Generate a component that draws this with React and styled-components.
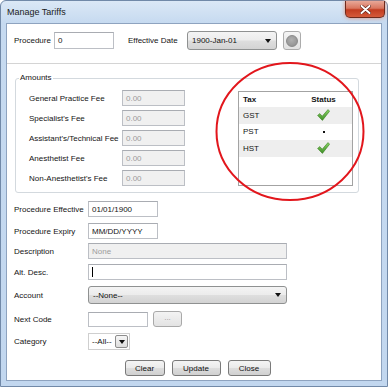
import React from 'react';
import styled, { createGlobalStyle } from 'styled-components';

const Global = createGlobalStyle`
  html, body { margin: 0; padding: 0; background: #ffffff; }
  body { font-family: "Liberation Sans", Arial, sans-serif; font-size: 8px; color: #141414; }
  * { box-sizing: border-box; }
`;

const Window = styled.div`
  position: relative;
  width: 388px;
  height: 387px;
  border: 1px solid #7189a8;
  border-radius: 6px 6px 0 0;
  background: linear-gradient(180deg, #dbe8f6 0px, #c6daf0 22px, #c2d7ef 100%);
  display: flex;
  flex-direction: column;
  padding: 0 5px 5px 5px;
`;

const TitleBar = styled.div`
  height: 22px;
  display: flex;
  align-items: flex-start;
  justify-content: space-between;
`;

const Title = styled.div`
  margin: 6px 0 0 1px;
  font-size: 9px;
  color: #1b1b1b;
`;

const CloseBtn = styled.div`
  width: 40px;
  height: 17px;
  margin-right: -3px;
  border: 1px solid #6f2a1c;
  border-top: none;
  border-radius: 0 0 5px 5px;
  background: linear-gradient(180deg, #e8a898 0%, #d9765f 45%, #c23c20 55%, #d55a3a 100%);
  box-shadow: 0 0 4px rgba(230, 110, 70, 0.7);
  display: flex;
  align-items: center;
  justify-content: center;
`;

const Client = styled.div`
  flex: 1;
  background: #ffffff;
  border: 1px solid #8ea3bf;
  display: flex;
  flex-direction: column;
`;

const TopRow = styled.div`
  display: flex;
  align-items: center;
  height: 19px;
  margin-top: 7px;
  padding-left: 7px;
`;

const Label = styled.div`
  width: ${p => p.$w || 'auto'};
  margin-left: ${p => p.$ml || 0}px;
  white-space: nowrap;
`;

const TextInput = styled.div`
  width: ${p => p.$w}px;
  height: ${p => p.$h || 16}px;
  margin-left: ${p => p.$ml || 0}px;
  border: 1px solid #bcbfc5;
  border-top-color: #a9acb2;
  background: ${p => (p.$disabled ? '#f0f0f0' : '#ffffff')};
  color: ${p => (p.$disabled ? '#9c9c9c' : '#141414')};
  display: flex;
  align-items: center;
  padding-left: 3px;
  white-space: nowrap;
`;

const Caret = styled.span`
  width: 1px;
  height: 10px;
  background: #000;
`;

const DropSelect = styled.div`
  width: ${p => p.$w}px;
  height: ${p => p.$h}px;
  margin-left: ${p => p.$ml || 0}px;
  border: 1px solid #8f9191;
  border-radius: 3px;
  background: linear-gradient(180deg, #f4f4f4 0%, #ececec 48%, #dedede 52%, #d3d3d3 100%);
  display: flex;
  align-items: center;
  justify-content: space-between;
  padding: 0 5px 0 4px;
  color: #111;
`;

const Arrow = styled.span`
  width: 0;
  height: 0;
  border-left: 3px solid transparent;
  border-right: 3px solid transparent;
  border-top: 4px solid #111;
`;

const RoundBtn = styled.div`
  width: 18px;
  height: 19px;
  margin-left: 6px;
  border: 1px solid #acacac;
  border-radius: 3px;
  background: linear-gradient(180deg, #f5f5f5, #e2e2e2);
  display: flex;
  align-items: center;
  justify-content: center;
`;

const Dot = styled.div`
  width: 12px;
  height: 12px;
  border-radius: 50%;
  background: radial-gradient(circle at 45% 40%, #b0b0b0, #8c8c8c);
  border: 1px solid #8a8a8a;
`;

const Divider = styled.div`
  margin-top: 13px;
  height: 1px;
  background: #d4d4d4;
`;

const Group = styled.fieldset`
  margin: 9px 0 0 8px;
  width: 344px;
  padding: 0 0 6px 13px;
  border: 1px solid #d3d9de;
  border-radius: 3px;
  display: flex;
  align-items: flex-start;
  min-width: 0;
`;

const Legend = styled.legend`
  margin-left: -10px;
  padding: 0 1px;
  line-height: 10px;
  font-size: 8px;
`;

const Fees = styled.div`
  display: flex;
  flex-direction: column;
  gap: 4px;
  margin-top: 7px;
`;

const FeeRow = styled.div`
  display: flex;
  align-items: center;
  height: 16px;
`;

const TaxTable = styled.div`
  margin: 8px 0 0 53px;
  width: 115px;
  height: 95px;
  border: 1px solid #a3a3a3;
  display: flex;
  flex-direction: column;
`;

const TaxRow = styled.div`
  display: grid;
  grid-template-columns: 56px 1fr;
  align-items: center;
  height: ${p => p.$h}px;
  background: ${p => (p.$alt ? '#eeeeee' : '#ffffff')};
  font-weight: ${p => (p.$head ? 'bold' : 'normal')};
`;

const TaxCell = styled.div`
  padding-left: 4px;
`;

const StatusCell = styled.div`
  display: flex;
  justify-content: center;
  align-items: center;
`;

const SmallDot = styled.span`
  width: 2px;
  height: 2px;
  background: #111;
`;

const Form = styled.div`
  margin-top: 8px;
  padding-left: 7px;
  display: flex;
  flex-direction: column;
`;

const FormRow = styled.div`
  display: flex;
  align-items: center;
  height: ${p => p.$h}px;
  margin-bottom: ${p => p.$gap}px;
`;

const FormLabel = styled.div`
  width: 74px;
  white-space: nowrap;
`;

const EllipsisBtn = styled.div`
  width: 29px;
  height: 16px;
  margin-left: 5px;
  border: 1px solid #a9a9a9;
  border-radius: 3px;
  background: linear-gradient(180deg, #f3f3f3, #e3e3e3);
  color: #9a9a9a;
  display: flex;
  align-items: center;
  justify-content: center;
  padding-bottom: 3px;
`;

const Combo = styled.div`
  width: 42px;
  height: 17px;
  border: 1px solid #cfcfcf;
  display: flex;
  align-items: center;
  justify-content: space-between;
  padding: 0 1px 0 3px;
`;

const ComboBtn = styled.div`
  width: 13px;
  height: 13px;
  border: 1px solid #8d8d8d;
  border-radius: 2px;
  background: linear-gradient(180deg, #f6f6f6, #dedede);
  display: flex;
  align-items: center;
  justify-content: center;
`;

const ButtonBar = styled.div`
  display: flex;
  justify-content: center;
  gap: 7px;
  padding-left: 7px;
`;

const Button = styled.div`
  width: ${p => p.$w}px;
  height: 16px;
  border: 1px solid #7a7a7a;
  border-radius: 3px;
  background: linear-gradient(180deg, #f4f4f4 0%, #ebebeb 48%, #dddddd 52%, #d0d0d0 100%);
  display: flex;
  align-items: center;
  justify-content: center;
  color: #111;
`;

const CircleOverlay = styled.svg`
  position: absolute;
  left: 214px;
  top: 60px;
  pointer-events: none;
`;

const Check = () => (
  <svg width="13" height="12" viewBox="0 0 13 12">
    <defs>
      <linearGradient id="gk" x1="0" y1="0" x2="0" y2="1">
        <stop offset="0" stopColor="#8ad466" />
        <stop offset="1" stopColor="#3f8f28" />
      </linearGradient>
    </defs>
    <path d="M0.6 6.4 L2.8 4.6 L5.2 7.2 L11 0.6 L12.6 2.2 L5.4 11.4 Z" fill="url(#gk)" stroke="#3a7f24" strokeWidth="0.6" strokeLinejoin="round" />
  </svg>
);

const fees = [
  "General Practice Fee",
  "Specialist's Fee",
  "Assistant's/Technical Fee",
  "Anesthetist Fee",
  "Non-Anesthetist's Fee",
];

export default function App() {
  return (
    <>
      <Global />
      <Window>
        <TitleBar>
          <Title>Manage Tariffs</Title>
          <CloseBtn>
            <svg width="11" height="9" viewBox="0 0 11 9">
              <path d="M1.5 1 L9.5 8 M9.5 1 L1.5 8" stroke="#5a1a10" strokeWidth="3.2" strokeLinecap="round" />
              <path d="M1.5 1 L9.5 8 M9.5 1 L1.5 8" stroke="#ffffff" strokeWidth="2" strokeLinecap="round" />
            </svg>
          </CloseBtn>
        </TitleBar>
        <Client>
          <TopRow>
            <Label $w="40px">Procedure</Label>
            <TextInput $w={60} $h={17}>0</TextInput>
            <Label $w="59px" $ml={14}>Effective Date</Label>
            <DropSelect $w={90} $h={19}>
              <span>1900-Jan-01</span>
              <Arrow />
            </DropSelect>
            <RoundBtn><Dot /></RoundBtn>
          </TopRow>
          <Divider />
          <Group>
            <Legend>Amounts</Legend>
            <Fees>
              {fees.map(f => (
                <FeeRow key={f}>
                  <Label $w="93px">{f}</Label>
                  <TextInput $w={63} $disabled>0.00</TextInput>
                </FeeRow>
              ))}
            </Fees>
            <TaxTable>
              <TaxRow $head $h={15}>
                <TaxCell>Tax</TaxCell>
                <StatusCell>Status</StatusCell>
              </TaxRow>
              <TaxRow $alt $h={16.5}>
                <TaxCell>GST</TaxCell>
                <StatusCell><Check /></StatusCell>
              </TaxRow>
              <TaxRow $h={16.5}>
                <TaxCell>PST</TaxCell>
                <StatusCell><SmallDot /></StatusCell>
              </TaxRow>
              <TaxRow $alt $h={16.5}>
                <TaxCell>HST</TaxCell>
                <StatusCell><Check /></StatusCell>
              </TaxRow>
            </TaxTable>
          </Group>
          <Form>
            <FormRow $h={16} $gap={6}>
              <FormLabel>Procedure Effective</FormLabel>
              <TextInput $w={70}>01/01/1900</TextInput>
            </FormRow>
            <FormRow $h={16} $gap={4}>
              <FormLabel>Procedure Expiry</FormLabel>
              <TextInput $w={70}>MM/DD/YYYY</TextInput>
            </FormRow>
            <FormRow $h={16} $gap={5}>
              <FormLabel>Description</FormLabel>
              <TextInput $w={199} $disabled>None</TextInput>
            </FormRow>
            <FormRow $h={16} $gap={6}>
              <FormLabel>Alt. Desc.</FormLabel>
              <TextInput $w={199}><Caret /></TextInput>
            </FormRow>
            <FormRow $h={18} $gap={7}>
              <FormLabel>Account</FormLabel>
              <DropSelect $w={199} $h={18}>
                <span>--None--</span>
                <Arrow />
              </DropSelect>
            </FormRow>
            <FormRow $h={16} $gap={6}>
              <FormLabel>Next Code</FormLabel>
              <TextInput $w={60} $h={15} />
              <EllipsisBtn>...</EllipsisBtn>
            </FormRow>
            <FormRow $h={17} $gap={10}>
              <FormLabel>Category</FormLabel>
              <Combo>
                <span>--All--</span>
                <ComboBtn><Arrow /></ComboBtn>
              </Combo>
            </FormRow>
          </Form>
          <ButtonBar>
            <Button $w={40}>Clear</Button>
            <Button $w={49}>Update</Button>
            <Button $w={43}>Close</Button>
          </ButtonBar>
        </Client>
        <CircleOverlay width="152" height="142" viewBox="0 0 152 142">
          <ellipse cx="75" cy="70.5" rx="73.5" ry="68.5" fill="none" stroke="#e2161c" strokeWidth="2" />
        </CircleOverlay>
      </Window>
    </>
  );
}
